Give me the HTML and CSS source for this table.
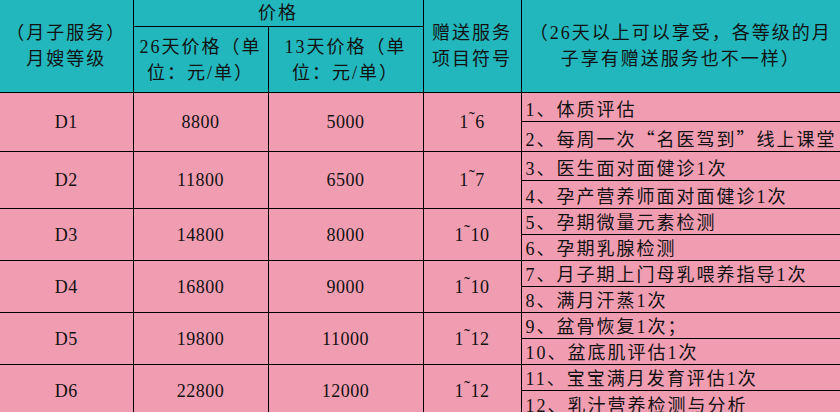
FILE: index.html
```html
<!DOCTYPE html>
<html lang="zh-CN">
<head>
<meta charset="utf-8">
<title>月嫂等级价格表</title>
<link rel="stylesheet" href="styles.css">
</head>
<body>
<table class="pkg">
  <colgroup>
    <col class="c1"><col class="c2"><col class="c3"><col class="c4"><col class="c5">
  </colgroup>
  <thead>
    <tr class="h1">
      <th rowspan="2">（月子服务）<br>月嫂等级</th>
      <th colspan="2">价格</th>
      <th rowspan="2">赠送服务<br>项目符号</th>
      <th rowspan="2">（26天以上可以享受，各等级的月<br>子享有赠送服务也不一样）</th>
    </tr>
    <tr class="h2">
      <th>26天价格（单<br>位：元/单）</th>
      <th>13天价格（单<br>位：元/单）</th>
    </tr>
  </thead>
  <tbody>
    <tr class="s29">
      <td rowspan="2" class="num">D1</td><td rowspan="2" class="num">8800</td><td rowspan="2" class="num">5000</td><td rowspan="2" class="num">1<span class="tl">˜</span>6</td>
      <td class="item">1、体质评估</td>
    </tr>
    <tr class="s30"><td class="item">2、每周一次<span class="q">“</span>名医驾到<span class="q">”</span>线上课堂</td></tr>
    <tr class="s29">
      <td rowspan="2" class="num">D2</td><td rowspan="2" class="num">11800</td><td rowspan="2" class="num">6500</td><td rowspan="2" class="num">1<span class="tl">˜</span>7</td>
      <td class="item">3、医生面对面健诊1次</td>
    </tr>
    <tr class="s28"><td class="item">4、孕产营养师面对面健诊1次</td></tr>
    <tr class="s26">
      <td rowspan="2" class="num">D3</td><td rowspan="2" class="num">14800</td><td rowspan="2" class="num">8000</td><td rowspan="2" class="num">1<span class="tl">˜</span>10</td>
      <td class="item">5、孕期微量元素检测</td>
    </tr>
    <tr class="s26"><td class="item">6、孕期乳腺检测</td></tr>
    <tr class="s26">
      <td rowspan="2" class="num">D4</td><td rowspan="2" class="num">16800</td><td rowspan="2" class="num">9000</td><td rowspan="2" class="num">1<span class="tl">˜</span>10</td>
      <td class="item">7、月子期上门母乳喂养指导1次</td>
    </tr>
    <tr class="s26"><td class="item">8、满月汗蒸1次</td></tr>
    <tr class="s26">
      <td rowspan="2" class="num">D5</td><td rowspan="2" class="num">19800</td><td rowspan="2" class="num">11000</td><td rowspan="2" class="num">1<span class="tl">˜</span>12</td>
      <td class="item">9、盆骨恢复1次；</td>
    </tr>
    <tr class="s26"><td class="item">10、盆底肌评估1次</td></tr>
    <tr class="s26">
      <td rowspan="2" class="num">D6</td><td rowspan="2" class="num">22800</td><td rowspan="2" class="num">12000</td><td rowspan="2" class="num">1<span class="tl">˜</span>12</td>
      <td class="item">11、宝宝满月发育评估1次</td>
    </tr>
    <tr class="s26"><td class="item">12、乳汁营养检测与分析</td></tr>
  </tbody>
</table>
</body>
</html>
```

FILE: styles.css
```css
html, body {
  margin: 0;
  padding: 0;
  background: #ffffff;
}

body {
  width: 840px;
  height: 412px;
  overflow: hidden;
}

.pkg {
  border-collapse: collapse;
  table-layout: fixed;
  width: 840px;
  border-style: hidden;
  font-family: "Liberation Serif", "Noto Sans CJK SC", serif;
  font-size: 18px;
  color: #111111;
}

.c1 { width: 133px; }
.c2 { width: 135px; }
.c3 { width: 155px; }
.c4 { width: 98px; }
.c5 { width: 319px; }

.pkg th,
.pkg td {
  border: 1px solid #000000;
  padding: 0;
  text-align: center;
  white-space: nowrap;
  overflow: hidden;
}

.pkg th {
  background: #22b7bd;
  font-weight: normal;
  letter-spacing: 2px;
  line-height: 26px;
  vertical-align: middle;
}

.pkg td {
  background: #f19db1;
}

.h1 { height: 25px; }
.h2 { height: 66px; }
.s26 { height: 26px; }
.s28 { height: 28px; }
.s29 { height: 29px; }
.s30 { height: 30px; }

.num {
  vertical-align: middle;
  letter-spacing: 0.5px;
  line-height: 20px;
}

.tl {
  display: inline-block;
  vertical-align: top;
  font-size: 18px;
  line-height: 14px;
}

.item {
  text-align: left !important;
  padding-left: 4px !important;
  vertical-align: bottom;
  letter-spacing: 2px;
  line-height: 22px;
}

.q {
  font-family: "Noto Sans CJK SC", sans-serif;
  font-feature-settings: "fwid" 1;
}
```
